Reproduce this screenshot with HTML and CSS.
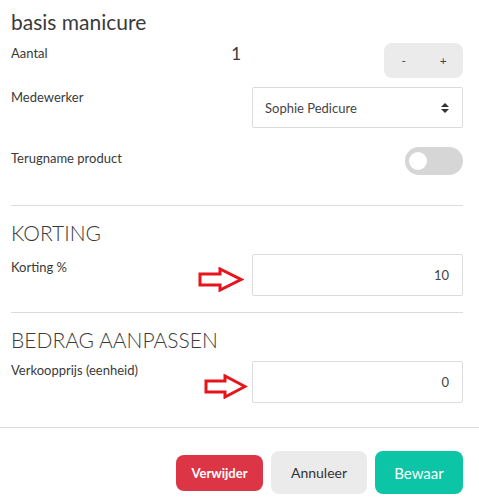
FILE: index.html
```html
<!DOCTYPE html>
<html lang="nl">
<head>
    <meta charset="UTF-8">
    <meta name="viewport" content="width=device-width, initial-scale=1.0">
    <title>basis manicure</title>
    <link rel="stylesheet" href="styles.css">
</head>
<body>
    <div class="modal-body">
        <h4 class="title">basis manicure</h4>

        <div class="form-row row-aantal">
            <div class="label-cell">
                <label>Aantal</label>
                <span class="amount">1</span>
            </div>
            <div class="control-cell end">
                <div class="stepper">
                    <button>-</button>
                    <button>+</button>
                </div>
            </div>
        </div>

        <div class="form-row row-medewerker">
            <div class="label-cell">
                <label>Medewerker</label>
            </div>
            <div class="control-cell">
                <div class="select">
                    <span>Sophie Pedicure</span>
                    <svg width="8" height="10" viewBox="0 0 8 10">
                        <path d="M4 0 L8 4 L0 4 Z M0 6 L8 6 L4 10 Z" fill="#333"/>
                    </svg>
                </div>
            </div>
        </div>

        <div class="form-row row-terugname">
            <div class="label-cell">
                <label>Terugname product</label>
            </div>
            <div class="control-cell end">
                <div class="toggle"><span class="knob"></span></div>
            </div>
        </div>

        <hr>

        <h4 class="section-title">KORTING</h4>
        <div class="form-row row-korting">
            <div class="label-cell">
                <label>Korting %</label>
            </div>
            <div class="control-cell field">
                <svg class="arrow arrow-1" width="46" height="25" viewBox="0 0 46 25">
                    <polygon points="2,7 22,7 22,2 43,12.5 22,23 22,18 2,18" fill="#fff" stroke="#e8141c" stroke-width="3"/>
                </svg>
                <input type="text" value="10">
            </div>
        </div>

        <hr class="hr-2">

        <h4 class="section-title">BEDRAG AANPASSEN</h4>
        <div class="form-row row-prijs">
            <div class="label-cell">
                <label>Verkoopprijs (eenheid)</label>
            </div>
            <div class="control-cell field">
                <svg class="arrow arrow-2" width="44" height="25" viewBox="0 0 44 25">
                    <polygon points="2,7 21,7 21,2 41,12.5 21,23 21,18 2,18" fill="#fff" stroke="#e8141c" stroke-width="3"/>
                </svg>
                <input type="text" value="0">
            </div>
        </div>
    </div>

    <div class="modal-footer">
        <button class="btn btn-danger">Verwijder</button>
        <button class="btn btn-default">Annuleer</button>
        <button class="btn btn-primary">Bewaar</button>
    </div>
</body>
</html>
```

FILE: styles.css
```css
body {
    margin: 0;
    font-family: Lato, "Open Sans", sans-serif;
    color: #3a3a3a;
    background-color: #fff;
}
.modal-body {
    padding: 9px 16px 0 11px;
}
.title {
    font-size: 21px;
    font-weight: 400;
    line-height: 26px;
    margin: 0 0 8px 0;
}
.form-row {
    display: grid;
    grid-template-columns: 241px 211px;
}
.label-cell {
    display: flex;
    justify-content: space-between;
    align-items: flex-start;
}
.label-cell label {
    font-size: 13px;
    line-height: 18px;
}
.control-cell {
    display: flex;
}
.control-cell.end {
    justify-content: flex-end;
}
.row-aantal .label-cell label {
    padding-top: 1px;
}
.amount {
    font-size: 17px;
    line-height: 18px;
    padding-top: 2px;
    padding-right: 11px;
}
.stepper {
    display: flex;
    width: 79px;
    height: 35px;
    background-color: #ebebeb;
    border-radius: 8px;
}
.stepper button {
    flex: 1;
    border: none;
    background: none;
    font-family: inherit;
    font-size: 12px;
    color: #444;
    padding: 0;
}
.row-medewerker {
    margin-top: 9px;
}
.row-medewerker .label-cell label {
    padding-top: 1px;
}
.select {
    width: 100%;
    height: 41px;
    box-sizing: border-box;
    border: 1px solid #dcdcdc;
    border-radius: 2px;
    display: flex;
    justify-content: space-between;
    align-items: center;
    padding: 0 13px 0 12px;
    font-size: 13px;
    color: #444;
}
.row-terugname {
    margin-top: 19px;
}
.row-terugname .label-cell label {
    padding-top: 2px;
}
.toggle {
    width: 58px;
    height: 28px;
    border-radius: 14px;
    background-color: #d6d6d6;
    display: flex;
    align-items: center;
    padding-left: 4px;
    box-sizing: border-box;
}
.knob {
    width: 18px;
    height: 18px;
    border-radius: 50%;
    background-color: #fff;
}
hr {
    border: none;
    border-top: 1px solid #dcdcdc;
    margin: 30px 0 0 0;
}
.hr-2 {
    margin-top: 16px;
}
.section-title {
    font-size: 21px;
    font-weight: 300;
    line-height: 26px;
    margin: 14px 0 8px 0;
}
.row-korting .label-cell label {
    padding-top: 4px;
}
.row-prijs .label-cell label {
    padding-top: 0;
}
.field {
    position: relative;
}
.field input {
    width: 100%;
    height: 42px;
    box-sizing: border-box;
    border: 1px solid #dcdcdc;
    border-radius: 2px;
    text-align: right;
    padding: 0 13px;
    font-family: inherit;
    font-size: 13px;
    color: #444;
}
.arrow {
    position: absolute;
    top: 13px;
}
.arrow-1 {
    right: calc(100% + 8px);
}
.arrow-2 {
    right: calc(100% + 4px);
}
.modal-footer {
    margin-top: 24px;
    border-top: 1px solid #dcdcdc;
    padding: 23px 16px 0 0;
    display: flex;
    justify-content: flex-end;
    align-items: center;
    gap: 8px;
}
.btn {
    border: none;
    font-family: inherit;
    font-size: 14px;
    border-radius: 8px;
    padding: 0;
}
.btn-danger {
    width: 87px;
    height: 36px;
    background-color: #dc3545;
    color: #fff;
    font-weight: 700;
    font-size: 13px;
}
.btn-default {
    width: 96px;
    height: 43px;
    background-color: #ebebeb;
    color: #333;
}
.btn-primary {
    width: 88px;
    height: 43px;
    background-color: #0cc4a6;
    color: #fff;
    font-size: 15px;
}
```
